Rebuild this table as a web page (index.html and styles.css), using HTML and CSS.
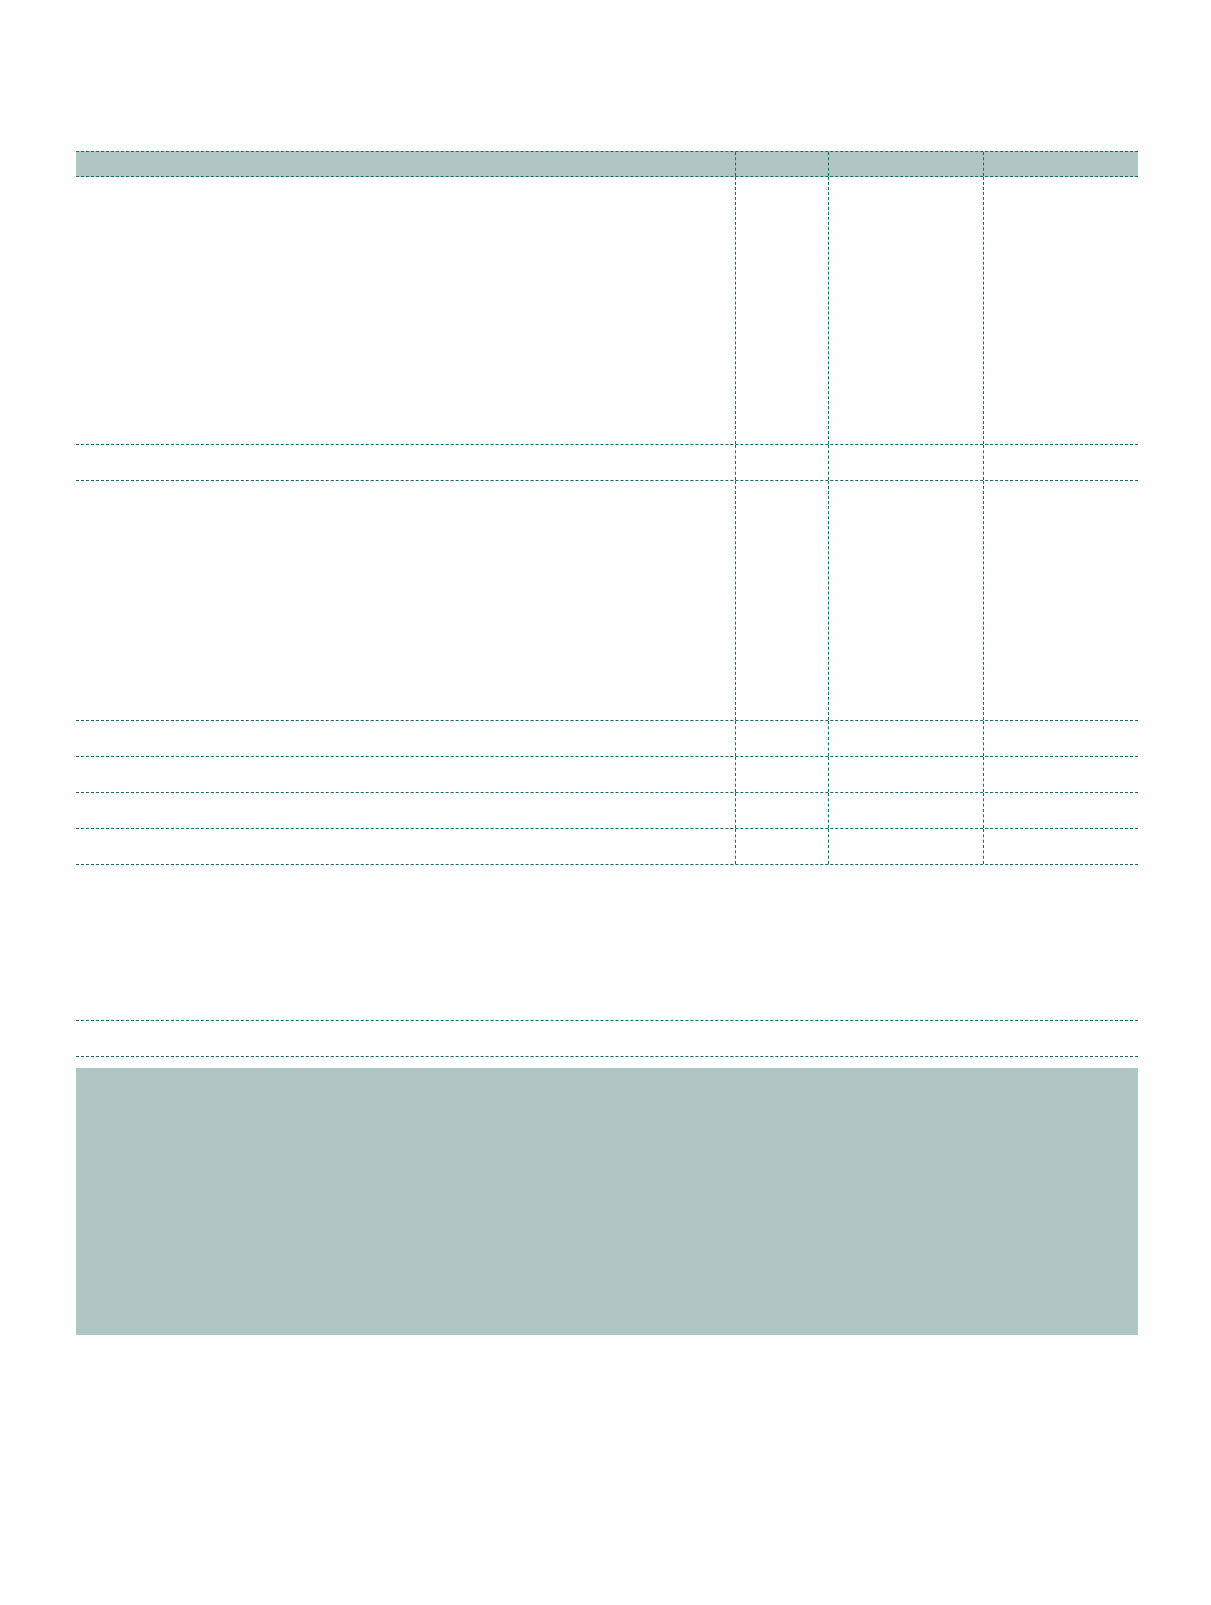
FILE: index.html
```html
<!DOCTYPE html>
<html lang="en">
<head>
<meta charset="utf-8">
<title>Table</title>
<link rel="stylesheet" href="styles.css">
</head>
<body>
<div class="page">
  <div class="grid">
    <div class="row head">
      <div class="cell"></div><div class="cell"></div><div class="cell"></div><div class="cell"></div>
    </div>
    <div class="row r268">
      <div class="cell"></div><div class="cell"></div><div class="cell"></div><div class="cell"></div>
    </div>
    <div class="row r36">
      <div class="cell"></div><div class="cell"></div><div class="cell"></div><div class="cell"></div>
    </div>
    <div class="row r240">
      <div class="cell"></div><div class="cell"></div><div class="cell"></div><div class="cell"></div>
    </div>
    <div class="row r36">
      <div class="cell"></div><div class="cell"></div><div class="cell"></div><div class="cell"></div>
    </div>
    <div class="row r36">
      <div class="cell"></div><div class="cell"></div><div class="cell"></div><div class="cell"></div>
    </div>
    <div class="row r36">
      <div class="cell"></div><div class="cell"></div><div class="cell"></div><div class="cell"></div>
    </div>
    <div class="row r36">
      <div class="cell"></div><div class="cell"></div><div class="cell"></div><div class="cell"></div>
    </div>
  </div>
  <div class="single"></div>
  <div class="panel"></div>
</div>
</body>
</html>
```
FILE: styles.css
```css
html, body {
  margin: 0;
  padding: 0;
  background: #fefefe;
  font-family: "Liberation Sans", Arial, sans-serif;
}
.page {
  padding: 151px 0 0 76px;
  width: 1062px;
}
.grid {
  width: 1062px;
}
.row {
  display: grid;
  grid-template-columns: 660px 93px 155px 154px;
  border-bottom: 1px dashed #1e6c60;
  box-sizing: border-box;
}
.row .cell {
  border-right: 1px dashed #1e6c60;
}
.row .cell:last-child {
  border-right: none;
}
.head {
  height: 26px;
  border-top: 1px dashed #1e6c60;
  background: #afc6c3;
}
.r268 { height: 268px; }
.r240 { height: 240px; }
.r36 { height: 36px; }
.single {
  margin-top: 155px;
  height: 37px;
  box-sizing: border-box;
  border-top: 1px dashed #1e6c60;
  border-bottom: 1px dashed #1e6c60;
}
.panel {
  margin-top: 11px;
  height: 267px;
  background: #afc6c3;
}
```
